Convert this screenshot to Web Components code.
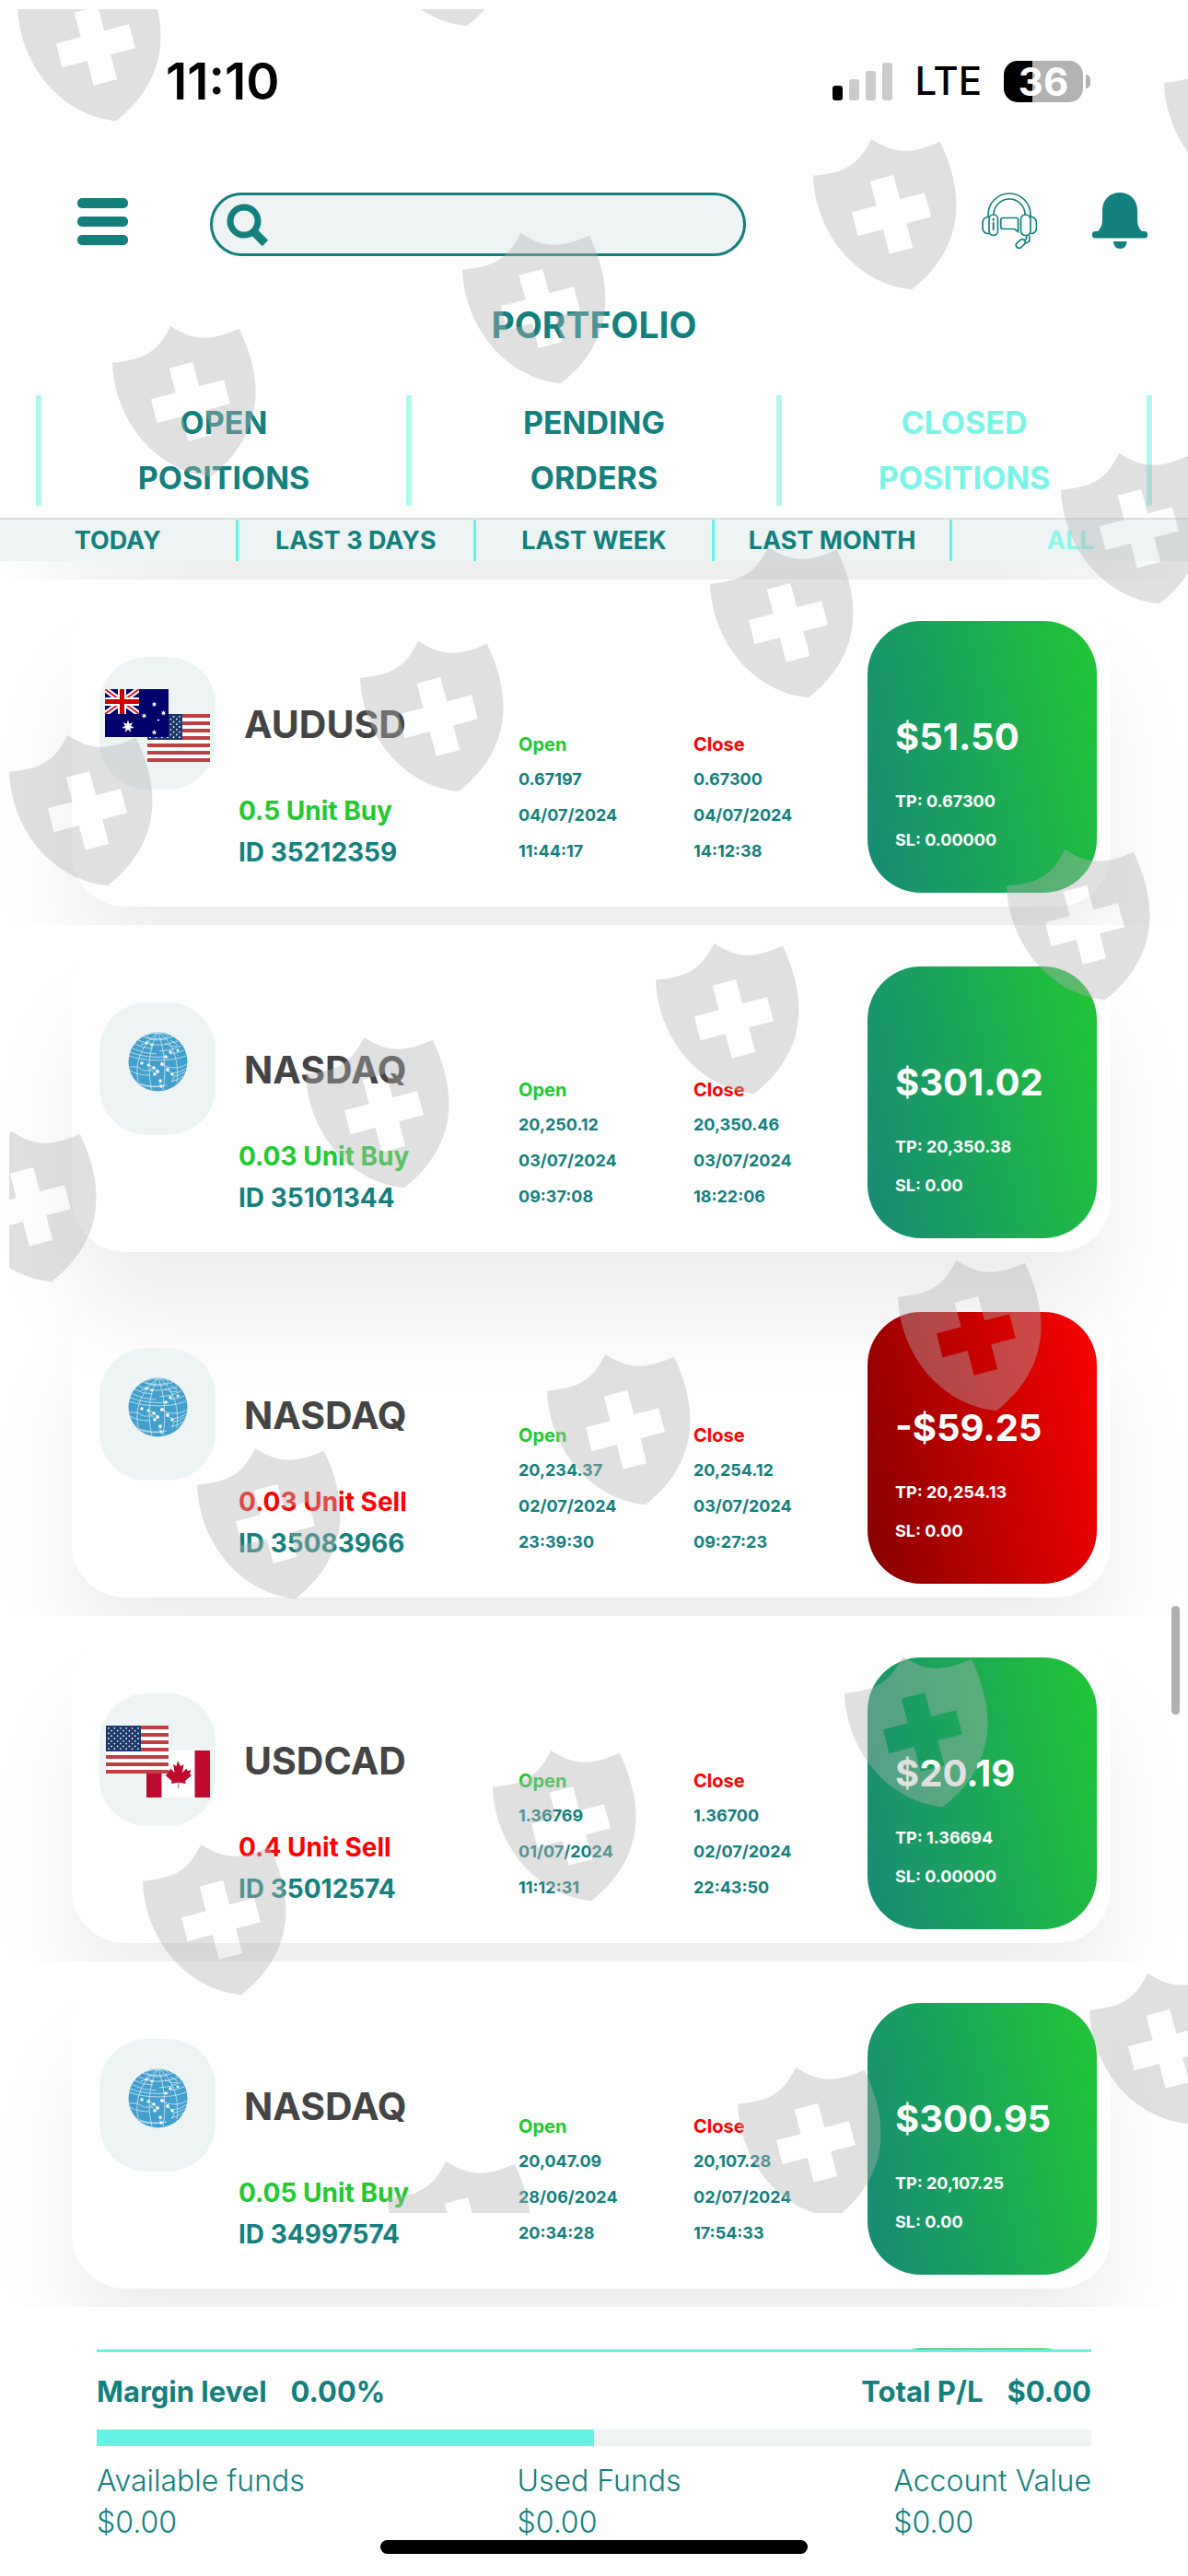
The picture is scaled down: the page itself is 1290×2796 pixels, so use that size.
<!DOCTYPE html>
<html lang="en">
<head>
<meta charset="utf-8">
<meta name="viewport" content="width=device-width, initial-scale=1">
<title>Portfolio</title>
<style>
  :root {
    --teal: #13807e;
    --mint: #66f2e4;
    --mint-soft: #b0f7f0;
    --mint-text: #7bf4e8;
    --mist: #eef4f4;
    --buy: #22c932;
    --sell: #ff0000;
    --gain-fill: linear-gradient(78deg, #168a76, #22c636);
    --loss-fill: linear-gradient(78deg, #850000, #fc0202);
  }
  body {
    margin: 0;
    background: #fff;
    color: var(--teal);
    font-family: Inter, "Liberation Sans", sans-serif;
  }
</style>
</head>
<body>
<portfolio-app></portfolio-app>

<script>
const define = (name, css, html) => customElements.define(name, class extends HTMLElement {
  constructor() {
    super();
    this.attachShadow({ mode: 'open' }).innerHTML =
      `<style>*{box-sizing:border-box}${css}</style>${typeof html === 'function' ? html(this) : html}`;
  }
});

/* ---------- status bar ---------- */
define('status-bar', `
  :host{display:flex;align-items:center;height:176px;padding:0 114px 0 180px;color:#000}
  .time{font-size:55px;line-height:60px;font-weight:600;flex:1}
  .signal{width:65px;height:41px;margin-right:24px}
  .net{font-size:42px;line-height:60px;font-weight:500;margin-right:24px}
  .battery{position:relative;display:flex;align-items:center;justify-content:center;width:86px;height:45px;border-radius:15px;
    background:linear-gradient(90deg,#000 36%,#b2b2b2 36%);color:#fff;font-size:42px;line-height:45px;font-weight:700}
  .battery::after{content:"";position:absolute;left:89px;top:15px;width:5px;height:15px;border-radius:0 5px 5px 0;background:#b2b2b2}
`, `
  <span class="time">11:10</span>
  <svg class="signal" viewBox="0 0 65 41" aria-hidden="true">
    <rect y="25" width="11" height="16" rx="3"/>
    <g fill="#cbcbcb"><rect x="18" y="18" width="11" height="23" rx="3"/><rect x="36" y="9" width="11" height="32" rx="3"/><rect x="54" width="11" height="41" rx="3"/></g>
  </svg>
  <span class="net">LTE</span>
  <span class="battery">36</span>
`);

/* ---------- top bar ---------- */
define('top-bar', `
  :host{display:flex;align-items:flex-start;padding:33px 44px 0 84px}
  button{display:block;flex:none;padding:0;border:0;background:none;color:var(--teal)}
  svg{display:block}
  .menu{margin-top:6px}
  .search{flex:1;display:flex;align-items:center;height:69px;margin:0 256px 0 89px;padding-left:15px;
    border:3px solid var(--teal);border-radius:35px;background:var(--mist)}
  input{flex:1;min-width:0;height:60px;margin:0 24px 0 8px;padding:0;border:0;outline:0;background:none;color:var(--teal);font:500 30px Inter,sans-serif}
  .help{margin-right:60px}
`, `
  <button class="menu" aria-label="Menu"><svg width="55" height="51" viewBox="0 0 55 51" fill="currentColor">
    <rect width="55" height="11" rx="5"/><rect y="20" width="55" height="11" rx="5"/><rect y="40" width="55" height="11" rx="5"/></svg></button>
  <label class="search">
    <svg width="46" height="46" viewBox="0 0 46 46" fill="none" stroke="currentColor" aria-hidden="true">
      <circle cx="19" cy="19" r="15" stroke-width="7"/><path d="M29 30 42 43" stroke-width="9"/></svg>
    <input type="search" aria-label="Search">
  </label>
  <button class="help" aria-label="Support"><svg width="60" height="61" viewBox="6 10 60 61" fill="none" stroke="currentColor" stroke-width="1.7">
    <path d="M13 36V34a23 23 0 0 1 46 0v2M19 35V34a17 17 0 0 1 34 0v1"/>
    <rect x="14" y="34" width="9.500" height="22.500" rx="4.700"/><rect x="48.500" y="34" width="10.500" height="22.500" rx="5"/>
    <path d="M14 36.500h-2q-5 1-5 7v4q0 6 5 7h2M59 36.500h1.500q5 1 5 7v4q0 6-5 7H59"/>
    <path d="M18.700 38.500v1.600M18.700 43v7" stroke-width="2" stroke-linecap="round"/>
    <path d="M29 37.500h14.500q2 0 2 2v13l-4-3H29q-2.300 0-2.300-2.300v-7.400q0-2.300 2.300-2.300z"/>
    <path d="M57.800 56.500v6.500l-4 2M54.600 56.500v3.500l-2.500 2"/>
    <rect x="42.800" y="62.300" width="11" height="6.400" rx="3.200" transform="rotate(-42 48.300 65.500)"/></svg></button>
  <button aria-label="Notifications"><svg width="60" height="61" viewBox="0 0 60 61" fill="currentColor">
    <path d="M30 0c11 0 19 8 19 19v9c0 8 2 11 5 14h2.500a3.800 3.800 0 0 1 0 7.600h-53a3.800 3.800 0 0 1 0-7.600H6c3-3 5-6 5-14v-9C11 8 19 0 30 0z"/><path d="M23 53h14.500c0 5-3 8-7.200 8S23 58 23 53z"/></svg></button>
`);

/* ---------- tabs ---------- */
define('position-tabs', `
  :host{display:flex;padding:0 39px}
  button{flex:1;padding:0;border:0;border-left:6px solid var(--mint-soft);background:none;color:var(--teal);
    font:700 34px/60px Inter,sans-serif}
  button:last-child{border-right:6px solid var(--mint-soft)}
  button[aria-pressed=true]{color:var(--mint-text)}
`, `
  <button aria-pressed="false">OPEN<br>POSITIONS</button>
  <button aria-pressed="false">PENDING<br>ORDERS</button>
  <button aria-pressed="true">CLOSED<br>POSITIONS</button>
`);

define('period-filter', `
  :host{display:flex;margin-top:13px;border-top:2px solid #dcdedd;background:var(--mist)}
  button{flex:1 1 0;height:45px;padding:0;border:0;border-right:3px solid var(--mint);background:none;color:var(--teal);
    font:700 27px/45px Inter,sans-serif;white-space:nowrap}
  button:last-child{border-right:0}
  button[aria-pressed=true]{color:#8cf6eb}
`, `
  <button aria-pressed="false">TODAY</button><button aria-pressed="false">LAST 3 DAYS</button><button aria-pressed="false">LAST WEEK</button><button aria-pressed="false">LAST MONTH</button><button aria-pressed="true">ALL</button>
`);

/* ---------- instrument pictures ---------- */
const usFlag = (x, y) => {
  let s = `<svg x="${x}" y="${y}" width="68" height="52" viewBox="0 0 68 52"><rect width="68" height="52" fill="#fff"/>`;
  for (let i = 0; i < 7; i++) s += `<rect y="${i * 8}" width="68" height="4" fill="#bf3f45"/>`;
  s += '<rect width="38" height="28" fill="#1b3668"/><g fill="#fff">';
  for (let r = 0; r < 9; r++)
    for (let c = 0; c < (r % 2 ? 5 : 6); c++)
      s += `<circle cx="${(r % 2 ? 6.2 : 3) + c * 6.4}" cy="${2.8 + r * 2.8}" r="0.9"/>`;
  return s + '</g></svg>';
};
const star = (cx, cy, r, n) => {
  const p = [];
  for (let i = 0; i < n * 2; i++) {
    const a = Math.PI * i / n - Math.PI / 2, k = i % 2 ? r * .45 : r;
    p.push((cx + k * Math.cos(a)).toFixed(2) + ',' + (cy + k * Math.sin(a)).toFixed(2));
  }
  return `<polygon fill="#fff" points="${p.join(' ')}"/>`;
};
const auFlag = `<svg x="6" y="35" width="69" height="52" viewBox="0 0 69 52"><rect width="69" height="52" fill="#00006b"/>
  <svg width="37" height="27" viewBox="0 0 37 27"><path d="M0 0 37 27M37 0 0 27" stroke="#fff" stroke-width="6"/><path d="M0 0 37 27M37 0 0 27" stroke="#d8202a" stroke-width="2"/>
  <path d="M18.500 0v27M0 13.500h37" stroke="#fff" stroke-width="9"/><path d="M18.500 0v27M0 13.500h37" stroke="#cc0000" stroke-width="5"/></svg>
  ${star(25, 40.5, 7, 7)}${star(53.5, 16.5, 3, 7)}${star(42.5, 29, 3, 7)}${star(63.5, 26, 3, 7)}${star(53.5, 47, 3, 7)}${star(58, 33.5, 1.6, 5)}</svg>`;
const caFlag = `<svg x="51" y="62" width="69" height="51" viewBox="0 0 69 51"><rect width="69" height="51" fill="#fff"/><path d="M0 0h16.500v51H0zM52.500 0H69v51H52.500z" fill="#bf0a30"/>
  <path fill="#bf0a30" d="M34 11l3 6 3.500-2-1.500 9 4.500-4.500 1 2.500 4-.7-1.500 4.200 2 1.500-7 6 .8 3-7.800-1.200.3 5.700h-1l.3-5.700-7.800 1.200.8-3-7-6 2-1.500-1.500-4.200 4 .7 1-2.500 4.500 4.500-1.500-9 3.500 2z"/></svg>`;
const globe = `<svg x="31" y="32" width="65" height="65" viewBox="0 0 65 65"><circle cx="32.500" cy="32.500" r="32" fill="#429fcc"/>
  <g fill="none" stroke="#e2f1f8" stroke-width="0.7">
    <path d="M32 1C18 12 6 30 11 54M32 1c-8 14-12 38-6 62M33 1c6 16 9 40 5 62M34 1c14 10 22 30 19 54"/>
    <ellipse cx="32" cy="4.500" rx="12" ry="3"/><path d="M16 5q16 8 33 0M11 9q20 10 43 1M7 13q9 5 20 5M5 18q12 6 26 6M58 15q-12 6-24 6"/>
    <path d="M2 22q18 7 42 5M1 26q20 7 46 4M47 30q8-1 16-4M46 24q8-1 15-4"/>
    <path d="M1 38h9l7 4h9M2 42q8 5 22 5M22 34l6 6M27 37l5 6M24 39l5 6M64 35q-8 6-22 3l-5-3M64 39q-8 6-16 6l-5-3M62 43q-6 5-12 5l-2 6"/>
    <path d="M8 54q12 6 26 5M12 57q14 5 30 1M34 57l3-4M47 54q8-2 13-6M20 9l6 5M14 14l6-2M40 12l8 4 6-1M46 9l8 5"/>
  </g>
  <g fill="#f4fafc"><circle cx="15" cy="34" r="1.800"/><circle cx="22" cy="36" r="1.600"/><circle cx="28" cy="39" r="1.800"/><circle cx="32" cy="43" r="2"/><circle cx="29" cy="46" r="1.800"/>
  <circle cx="37" cy="35" r="2"/><circle cx="43" cy="41" r="1.900"/><circle cx="48" cy="46" r="1.800"/><circle cx="26" cy="14" r="1.600"/><circle cx="20" cy="12" r="1.600"/><circle cx="46" cy="22" r="1.800"/>
  <circle cx="41" cy="27" r="1.800"/><circle cx="35" cy="53" r="1.800"/><circle cx="36" cy="59" r="1.800"/><circle cx="54" cy="20" r="1.500"/></g></svg>`;

define('instrument-icon', `
  :host{display:block;width:126px;height:144px}
  .pill{width:126px;height:144px;border-radius:52px;background:var(--mist)}
  svg{display:block}
`, el => {
  const art = { audusd: usFlag(52, 62) + auFlag, usdcad: caFlag + usFlag(7, 35), nasdaq: globe };
  return `<div class="pill"><svg width="126" height="144" viewBox="0 0 126 144" aria-hidden="true">${art[el.getAttribute('name')]}</svg></div>`;
});

/* ---------- trade card ---------- */
const cardCss = `
  .row{padding:20px 84px 20px 78px;background:#fff}
  .card{position:relative;height:335px;border-radius:58px;background:#fff;box-shadow:0 75px 100px rgba(0,0,0,.07)}
`;
define('trade-card', `
  :host{display:block;position:relative;overflow:clip}
  :host([open-below]){overflow:visible}
  ${cardCss}
  :host([see-through]) .row,:host([see-through]) .card{background:none}
  .card{display:grid;grid-template-columns:126px 25px minmax(0,304fr) minmax(0,190fr) minmax(0,189fr) 249px;padding:0 15px 0 30px}
  instrument-icon{margin-top:64px}
  .info{grid-column:3;padding-top:113px;font-weight:700}
  .name{margin:0 0 48px;padding-left:6px;color:#444;font-size:41px;line-height:48px;font-weight:700}
  .info div{font-size:28px;line-height:45px;white-space:nowrap}
  .buy{color:var(--buy)} .sell,.close b{color:var(--sell)} .open b{color:var(--buy)}
  .leg{padding-top:141px;font-weight:700;font-size:18px;line-height:39px}
  .leg b{display:block;font-size:20px;line-height:36px;font-weight:700}
  .leg span,.value span{display:block;white-space:nowrap}
  .value{height:295px;margin-top:25px;padding:102px 0 0 30px;border-radius:58px;color:#fff;font-weight:700;font-size:18px;line-height:42px;
    background:var(--gain-fill)}
  .value.loss{background:var(--loss-fill)}
  .value strong{display:block;margin-bottom:25px;font-size:40px;line-height:48px;font-weight:700;white-space:nowrap}
`, el => {
  const a = n => el.getAttribute(n);
  const leg = (cls, title, v) => `<div class="leg ${cls}"><b>${title}</b>${v.split(' ').map(t => `<span>${t}</span>`).join('')}</div>`;
  return `<div class="row"><article class="card">
    <instrument-icon name="${a('symbol').toLowerCase()}"></instrument-icon>
    <div class="info"><h2 class="name">${a('symbol')}</h2>
      <div class="${a('size').endsWith('Buy') ? 'buy' : 'sell'}">${a('size')}</div><div>ID ${a('ref')}</div></div>
    ${leg('open', 'Open', a('opened'))}${leg('close', 'Close', a('closed'))}
    <div class="value ${a('pl')[0] === '-' ? 'loss' : ''}"><strong>${a('pl')}</strong><span>TP: ${a('tp')}</span><span>SL: ${a('sl')}</span></div>
  </article></div>`;
});

/* top edge of the card that scrolls in under the summary */
define('card-edge', `
  :host{display:block;position:relative;height:46px;overflow:hidden}
  ${cardCss}
  .card{padding:25px 15px 0 0}
  .chip{width:249px;height:295px;margin-left:auto;border-radius:58px;background:var(--gain-fill)}
`, `<div class="row"><div class="card"><div class="chip"></div></div></div>`);

/* shadow left by the card that scrolled out above */
define('shadow-edge', `
  :host{display:block;height:20px;background:linear-gradient(90deg,#fff,#f5f5f5 7%,#efefef 16%,#efefef 84%,#f5f5f5 93%,#fff)}
`, '');

/* ---------- account summary ---------- */
define('account-summary', `
  :host{display:block;position:relative;height:246px;padding:0 105px;background:#fff}
  .line{display:flex;justify-content:space-between;padding-top:23px;border-top:3px solid var(--mint);font-weight:700;font-size:31px;line-height:40px}
  .line span span{margin-left:26px}
  .bar{height:18px;margin:21px 0 15px;background:linear-gradient(90deg,var(--mint) 50%,var(--mist) 50%)}
  dl{display:flex;justify-content:space-between;margin:0;font-size:32px;line-height:45px;font-weight:300}
  dd{margin:0}
  .home{position:absolute;left:32%;right:32%;bottom:24px;height:15px;border-radius:8px;background:#000}
`, `
  <div class="line"><span>Margin level<span>0.00%</span></span><span>Total P/L<span>$0.00</span></span></div>
  <div class="bar" role="progressbar" aria-label="Margin level" aria-valuenow="50"></div>
  <dl><div><dt>Available funds</dt><dd>$0.00</dd></div><div><dt>Used Funds</dt><dd>$0.00</dd></div><div><dt>Account Value</dt><dd>$0.00</dd></div></dl>
  <div class="home"></div>
`);

/* ---------- shield watermark ---------- */
const shields = [[19, -32], [400, -135], [122, 354], [502, 253], [883, 151], [1264, 50], [10, 798], [391, 696], [771, 594], [1152, 492],
  [-51, 1228], [332, 1126], [712, 1024], [1093, 922], [214, 1572], [594, 1470], [975, 1368], [155, 2002], [535, 1900], [917, 1798],
  [421, 2346], [801, 2244], [1183, 2142]];
define('shield-watermark', `
  :host{position:absolute;inset:10px 0 auto 10px;height:2392px;overflow:hidden;pointer-events:none}
  svg{display:block;width:1280px;height:2392px}
`, `<svg viewBox="10 10 1280 2392" aria-hidden="true"><defs><path id="s" fill-rule="evenodd" d="M63.3 0C90 17 107 16 137.800 2.700 163 55 168 115 107 163.300 45 157 2 100 0 39.700 40 36 50 25 63.300 0zM61.700 45.700 87.200 39l7 26.300 26.800-7 7 26-26.800 7 7 26.700-25.500 6.700-7-26.700-27.200 7.300-6.500-26 26.700-7z"/></defs>
  <g fill="#b2b2b2" fill-opacity=".404">${shields.map(([x, y]) => `<use href="#s" x="${x}" y="${y}"/>`).join('')}</g></svg>`);

define('scroll-thumb', `
  :host{position:absolute;right:9px;top:1743px;width:9px;height:118px;border-radius:5px;background:#b0b0b0}
`, '');

/* ---------- page ---------- */
define('portfolio-app', `
  :host{display:block;position:relative;overflow:hidden}
  h1{margin:45px 0 46px;text-align:center;font-size:39px;line-height:60px;font-weight:700}
`, `
  <status-bar></status-bar>
  <top-bar></top-bar>
  <h1>PORTFOLIO</h1>
  <position-tabs></position-tabs>
  <period-filter></period-filter>
  <main>
    <shadow-edge></shadow-edge>
    <trade-card symbol="AUDUSD" size="0.5 Unit Buy" ref="35212359" opened="0.67197 04/07/2024 11:44:17" closed="0.67300 04/07/2024 14:12:38" pl="$51.50" tp="0.67300" sl="0.00000"></trade-card>
    <trade-card open-below symbol="NASDAQ" size="0.03 Unit Buy" ref="35101344" opened="20,250.12 03/07/2024 09:37:08" closed="20,350.46 03/07/2024 18:22:06" pl="$301.02" tp="20,350.38" sl="0.00"></trade-card>
    <trade-card see-through symbol="NASDAQ" size="0.03 Unit Sell" ref="35083966" opened="20,234.37 02/07/2024 23:39:30" closed="20,254.12 03/07/2024 09:27:23" pl="-$59.25" tp="20,254.13" sl="0.00"></trade-card>
    <trade-card symbol="USDCAD" size="0.4 Unit Sell" ref="35012574" opened="1.36769 01/07/2024 11:12:31" closed="1.36700 02/07/2024 22:43:50" pl="$20.19" tp="1.36694" sl="0.00000"></trade-card>
    <trade-card symbol="NASDAQ" size="0.05 Unit Buy" ref="34997574" opened="20,047.09 28/06/2024 20:34:28" closed="20,107.28 02/07/2024 17:54:33" pl="$300.95" tp="20,107.25" sl="0.00"></trade-card>
    <card-edge></card-edge>
  </main>
  <account-summary></account-summary>
  <shield-watermark></shield-watermark>
  <scroll-thumb></scroll-thumb>
`);
</script>
</body>
</html>
